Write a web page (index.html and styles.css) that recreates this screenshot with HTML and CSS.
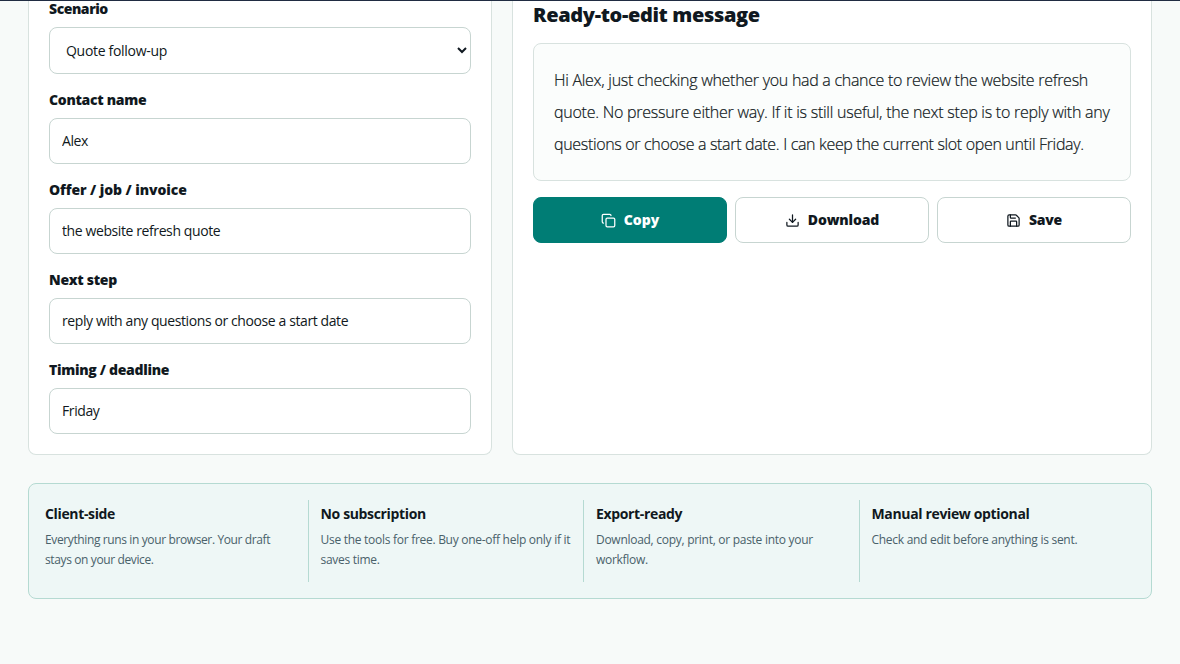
FILE: index.html
```html
<!DOCTYPE html>
<html lang="en">
<head>
<meta charset="utf-8">
<title>Message builder</title>
<link rel="stylesheet" href="styles.css">
</head>
<body>
<div class="topbar"></div>
<main class="page">
  <div class="workspace">
    <form class="panel fields">
      <label class="field"><span class="label">Scenario</span>
        <select class="control select"><option>Quote follow-up</option></select></label>
      <label class="field"><span class="label">Contact name</span>
        <input class="control" value="Alex"></label>
      <label class="field"><span class="label wide">Offer / job / invoice</span>
        <input class="control" value="the website refresh quote"></label>
      <label class="field"><span class="label">Next step</span>
        <input class="control" value="reply with any questions or choose a start date"></label>
      <label class="field"><span class="label">Timing / deadline</span>
        <input class="control" value="Friday"></label>
    </form>
    <section class="panel output">
      <h2 class="title">Ready-to-edit message</h2>
      <div class="message"><span class="line">Hi Alex, just checking whether you had a chance to review the website refresh</span><br><span class="line loose">quote. No pressure either way. If it is still useful, the next step is to reply with any</span><br><span class="line tight">questions or choose a start date. I can keep the current slot open until Friday.</span></div>
      <div class="actions">
        <button class="btn primary" type="button">
          <svg class="icon" viewBox="0 0 24 24"><rect width="14" height="14" x="8" y="8" rx="2"/><path d="M4 16c-1.1 0-2-.9-2-2V4c0-1.1.9-2 2-2h10c1.1 0 2 .9 2 2"/></svg><span class="btn-text">Copy</span></button>
        <button class="btn download" type="button">
          <svg class="icon" viewBox="0 0 24 24"><path d="M12 15V3"/><path d="M21 15v4a2 2 0 0 1-2 2H5a2 2 0 0 1-2-2v-4"/><path d="m7 10 5 5 5-5"/></svg><span class="btn-text">Download</span></button>
        <button class="btn save" type="button">
          <svg class="icon" viewBox="0 0 24 24"><path d="M15.2 3a2 2 0 0 1 1.4.6l3.8 3.8a2 2 0 0 1 .6 1.4V19a2 2 0 0 1-2 2H5a2 2 0 0 1-2-2V5a2 2 0 0 1 2-2z"/><path d="M17 21v-7a1 1 0 0 0-1-1H8a1 1 0 0 0-1 1v7"/><path d="M7 3v4a1 1 0 0 0 1 1h7"/></svg><span class="btn-text">Save</span></button>
      </div>
    </section>
  </div>
  <section class="strip">
    <div class="point"><strong class="point-title">Client-side</strong><p class="point-text narrow">Everything runs in your browser. Your draft<br>stays on your device.</p></div>
    <div class="point"><strong class="point-title">No subscription</strong><p class="point-text">Use the tools for free. Buy one-off help only if it<br>saves time.</p></div>
    <div class="point"><strong class="point-title">Export-ready</strong><p class="point-text">Download, copy, print, or paste into your<br>workflow.</p></div>
    <div class="point"><strong class="point-title">Manual review optional</strong><p class="point-text">Check and edit before anything is sent.</p></div>
  </section>
</main>
</body>
</html>
```
FILE: styles.css
```css
* { box-sizing: border-box; }
body {
  margin: 0;
  background: #f7faf9;
  color: #101820;
  font-family: "Open Sans", "Noto Sans", sans-serif;
  overflow: hidden;
}
.topbar { height: 1px; background: #202c42; }
.page { padding: 0 28px; }
.workspace {
  display: grid;
  grid-template-columns: 464px 640px;
  gap: 20px;
  height: 454px;
}
.panel {
  background: #fff;
  border: 1px solid #d8e2df;
  border-top: 0;
  border-radius: 0 0 8px 8px;
  padding: 0 20px 20px;
}
.fields { display: flex; flex-direction: column; gap: 17px; }
.field { display: flex; flex-direction: column; gap: 9px; }
.label {
  font-size: 14px;
  font-weight: 800;
  line-height: 18px;
  letter-spacing: -0.3px;
  white-space: nowrap;
}
.wide { letter-spacing: -0.08px; }
.field:first-child .label { line-height: 16px; margin-bottom: 1px; letter-spacing: -0.45px; }
.control {
  width: 100%;
  height: 46px;
  border: 1px solid #c7d5d1;
  border-radius: 8px;
  background: #fff;
  color: #101820;
  padding: 0 12px 1px;
  font: 400 14px "Open Sans", "Noto Sans", sans-serif;
  letter-spacing: -0.4px;
}
.select { height: 47px; padding-bottom: 0; letter-spacing: -0.3px; }
.title {
  margin: 0 0 14px;
  font-size: 20px;
  font-weight: 800;
  line-height: 28px;
  letter-spacing: -0.35px;
}
.message {
  height: 138px;
  padding: 20px;
  border: 1px solid #d8e2df;
  border-radius: 8px;
  background: #fbfdfc;
  font-size: 16px;
  font-weight: 300;
  line-height: 32px;
  white-space: nowrap;
  -webkit-text-stroke: 0.2px #101820;
}
.line { letter-spacing: -0.28px; }
.loose { letter-spacing: -0.25px; }
.tight { letter-spacing: -0.33px; }
.actions {
  display: grid;
  grid-template-columns: repeat(3, 1fr);
  gap: 8px;
  margin-top: 16px;
}
.btn {
  display: flex;
  align-items: center;
  justify-content: center;
  gap: 8px;
  height: 46px;
  padding: 0;
  border: 1px solid #c7d5d1;
  border-radius: 8px;
  background: #fff;
  color: #101820;
  font: 800 14px "Open Sans", "Noto Sans", sans-serif;
}
.btn-text { padding-bottom: 2px; }
.download { letter-spacing: -0.15px; }
.save { letter-spacing: -0.3px; }
.primary { background: #007d75; border-color: #007d75; color: #fff; }
.icon {
  width: 15px;
  height: 15px;
  fill: none;
  stroke: currentColor;
  stroke-width: 2;
  stroke-linecap: round;
  stroke-linejoin: round;
}
.strip {
  display: grid;
  grid-template-columns: repeat(4, 1fr);
  gap: 12px;
  height: 116px;
  margin-top: 28px;
  padding: 16px;
  border: 1px solid #b5dad2;
  border-radius: 8px;
  background: #eef7f6;
}
.point { border-right: 1px solid #b5dad2; padding-top: 4px; white-space: nowrap; }
.point:last-child { border-right: 0; }
.point-title {
  display: block;
  font-size: 14px;
  font-weight: 700;
  line-height: 20px;
  letter-spacing: -0.35px;
}
.point-text {
  margin: 6px 0 0;
  color: #49616a;
  font-size: 12px;
  line-height: 20px;
  letter-spacing: -0.28px;
}
.narrow { letter-spacing: -0.38px; }
```
